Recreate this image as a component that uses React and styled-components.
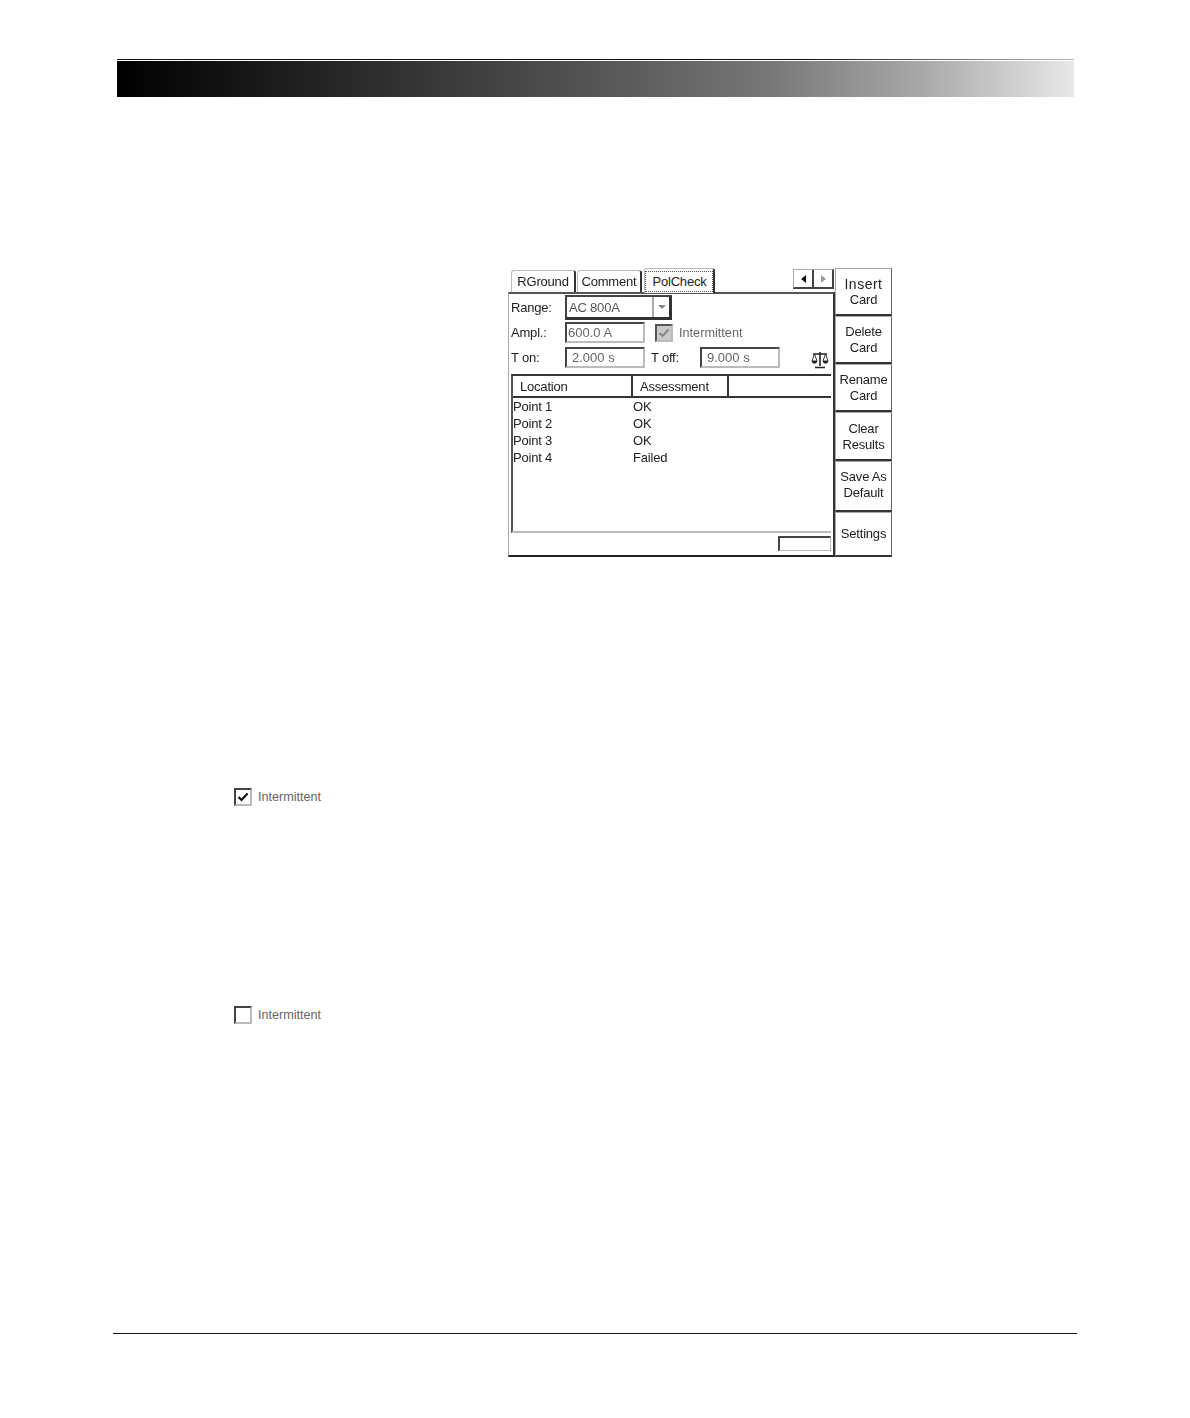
import styled, { createGlobalStyle } from "styled-components"

const GlobalStyle = createGlobalStyle`
html, body {
  margin: 0;
  padding: 0;
  background: #fff;
  font-family: "Liberation Sans", Arial, sans-serif;
}
`;

const Page = styled.div`
width: 1190px;
height: 1418px;
padding-top: 59px;
box-sizing: border-box;
display: flex;
flex-direction: column;
overflow: hidden;
`;

const HeaderBand = styled.div`
margin-left: 117px;
width: 957px;
height: 38px;
box-sizing: border-box;
border-top: 1px solid #111;
border-image: linear-gradient(90deg, #111 72%, #bbb 100%) 1;
padding-top: 1px;
& div {
  height: 36px;
  background: linear-gradient(90deg, #000 0%, #111 10%, #2a2a2a 25%, #555 50%, #777 68%, #a8a8a8 84%, #d0d0d0 94%, #e8e8e8 100%);
}
`;

const Shot = styled.div`
margin: 171px 0 0 508px;
width: 384px;
height: 289px;
display: flex;
color: #222;
font-size: 13px;
letter-spacing: -0.2px;
filter: blur(0.35px);
`;

const MainPanel = styled.div`
width: 327px;
display: flex;
flex-direction: column;
`;

const TabRow = styled.div`
height: 24px;
display: flex;
align-items: flex-end;
padding-left: 3px;
position: relative;
`;

const Tab = styled.div`
height: ${props => props.active ? "25px" : "22px"};
width: ${props => props.width}px;
box-sizing: border-box;
margin-right: ${props => props.active ? "0" : "1px"};
border: 1px solid #bbb;
border-right: 2px solid #333;
border-bottom: none;
border-radius: 3px 3px 0 0;
display: flex;
align-items: center;
justify-content: center;
background: #fff;
${props => props.active && `
  margin-bottom: -1px;
  margin-left: 1px;
  position: relative;
  z-index: 1;
  & span { outline: 1px dotted #555; padding: 2px 5px 2px 6px; white-space: nowrap; }
`}
`;

const ScrollArrows = styled.div`
position: absolute;
left: 285px;
top: 1px;
width: 41px;
height: 20px;
box-sizing: border-box;
border: 1px solid #aaa;
border-right: 2px solid #444;
border-bottom: 2px solid #444;
display: flex;
`;

const ArrowCell = styled.div`
flex: 1;
display: flex;
align-items: center;
justify-content: center;
&:first-child { border-right: 2px solid #444; }
&::before {
  content: "";
  border-top: 4px solid transparent;
  border-bottom: 4px solid transparent;
  ${props => props.left ? "border-right: 5px solid #111;" : "border-left: 5px solid #999;"}
}
`;

const Body = styled.div`
flex: 1;
box-sizing: border-box;
border-top: 2px solid #555;
border-left: 1px solid #aaa;
border-right: 2px solid #333;
border-bottom: 2px solid #222;
display: flex;
flex-direction: column;
`;

const Form = styled.div`
height: 80px;
box-sizing: border-box;
padding: 0 0 3px 2px;
display: flex;
flex-direction: column;
`;

const FormRow = styled.div`
height: ${props => props.h}px;
display: flex;
align-items: center;
position: relative;
`;

const Label = styled.div`
width: ${props => props.width || 54}px;
margin-left: ${props => props.left || 0}px;
flex-shrink: 0;
`;

const Field = styled.div`
width: ${props => props.width}px;
height: 21px;
box-sizing: border-box;
border: 2px solid #444;
border-right-color: #bbb;
border-bottom-color: #bbb;
padding-left: ${props => props.pad || 1}px;
display: flex;
align-items: center;
color: #666;
font-size: 13px;
letter-spacing: 0;
`;

const Combo = styled.div`
width: 107px;
height: 25px;
box-sizing: border-box;
border: 2px solid #444;
border-right: 3px solid #333;
border-bottom: 3px solid #333;
display: flex;
align-items: center;
justify-content: space-between;
padding-left: 2px;
color: #555;
`;

const ComboButton = styled.div`
width: 17px;
height: 20px;
box-sizing: border-box;
border-left: 2px solid #aaa;
display: flex;
align-items: center;
justify-content: center;
&::before {
  content: "";
  border-left: 4px solid transparent;
  border-right: 4px solid transparent;
  border-top: 4px solid #888;
}
`;

const CheckBox = styled.div`
width: 18px;
height: 18px;
box-sizing: border-box;
border: 2px solid ${props => props.dark ? "#444" : "#555"};
border-right-color: #bbb;
border-bottom-color: #bbb;
background: ${props => props.disabled ? "#c8c8c8" : "#fff"};
display: flex;
align-items: center;
justify-content: center;
flex-shrink: 0;
`;

const InlineCheck = styled.div`
margin-left: 10px;
display: flex;
align-items: center;
gap: 6px;
color: #666;
font-size: 12.7px;
letter-spacing: 0;
`;

const ScaleIcon = styled.svg`
position: absolute;
left: 300px;
top: 7px;
`;

const Table = styled.div`
flex: 1;
margin: 0 2px 0 2px;
display: flex;
flex-direction: column;
box-sizing: border-box;
border-left: 2px solid #555;
border-top: 2px solid #333;
`;

const HeaderRow = styled.div`
height: 20px;
display: flex;
border-bottom: 2px solid #333;
`;

const HeaderCell = styled.div`
width: ${props => props.width}px;
box-sizing: border-box;
padding-left: ${props => props.pad}px;
border-right: ${props => props.last ? "none" : "2px solid #333"};
display: flex;
align-items: center;
padding-top: 1px;
`;

const Rows = styled.div`
flex: 1;
border-bottom: 2px solid #bbb;
margin-left: -1px;
`;

const Row = styled.div`
height: 17px;
display: flex;
align-items: center;
&:first-child span:first-child { clip-path: inset(3px 0 0 0); }
`;

const Cell = styled.span`
width: ${props => props.width}px;
flex-shrink: 0;
padding-left: 1px;
box-sizing: border-box;
`;

const StatusBar = styled.div`
height: 22px;
flex-shrink: 0;
display: flex;
justify-content: flex-end;
align-items: flex-start;
padding: 3px 2px 0 0;
box-sizing: border-box;
`;

const StatusBox = styled.div`
width: 53px;
height: 15px;
box-sizing: border-box;
border: 2px solid #444;
border-right: 1px solid #bbb;
border-bottom: 1px solid #bbb;
`;

const SideBar = styled.div`
width: 57px;
display: flex;
flex-direction: column;
`;

const SideButton = styled.div`
height: ${props => props.h}px;
box-sizing: border-box;
border: 1px solid #aaa;
border-right: 1px solid #666;
border-bottom: 2px solid #333;
display: flex;
align-items: center;
justify-content: center;
text-align: center;
line-height: 16px;
padding-top: ${props => props.top || 0}px;
padding-bottom: ${props => props.bottom || 0}px;
`;

const ButtonLine = styled.div`
white-space: nowrap;
letter-spacing: ${props => props.wide ? "0.5px" : "inherit"};
font-size: ${props => props.wide ? "14px" : "inherit"};
`;

const CheckLine = styled.div`
margin: ${props => props.top}px 0 0 234px;
display: flex;
align-items: center;
gap: 6px;
height: 18px;
color: #666;
font-size: 12.6px;
`;

const FooterLine = styled.div`
margin: ${props => props.top}px 0 0 113px;
width: 964px;
height: 1px;
background: #111;
`;

const Tick = ({ color }) => (
  <svg width="12" height="12" viewBox="0 0 12 12">
    <path d="M1.5 6 L4.5 9 L10.5 2.5" fill="none" stroke={color} strokeWidth="2.2" />
  </svg>
);

const Scale = () => (
  <ScaleIcon width="18" height="18" viewBox="0 0 18 18">
    <path d="M9 1 V15 M2 3 H16 M4 16.5 H14" stroke="#222" strokeWidth="1.6" fill="none" />
    <path d="M3.5 3 L1 10 H6 Z M14.5 3 L12 10 H17 Z" stroke="#333" strokeWidth="1" fill="none" />
    <path d="M0.5 10 H6.5 L5 12.5 H2 Z M11.5 10 H17.5 L16 12.5 H13 Z" fill="#222" />
  </ScaleIcon>
);

const points = [
  ["Point 1", "OK"],
  ["Point 2", "OK"],
  ["Point 3", "OK"],
  ["Point 4", "Failed"],
];

const buttons = [
  { lines: ["Insert", "Card"], h: 48, top: 1, wide: true },
  { lines: ["Delete", "Card"], h: 48 },
  { lines: ["Rename", "Card"], h: 48 },
  { lines: ["Clear", "Results"], h: 49, top: 2 },
  { lines: ["Save As", "Default"], h: 51, bottom: 2 },
  { lines: ["Settings"], h: 45 },
];

const App = () => {
  return <Page>
    <GlobalStyle />
    <HeaderBand><div /></HeaderBand>
    <Shot>
      <MainPanel>
        <TabRow>
          <Tab width={65}>RGround</Tab>
          <Tab width={65}>Comment</Tab>
          <Tab active width={71}><span>PolCheck</span></Tab>
          <ScrollArrows>
            <ArrowCell left />
            <ArrowCell />
          </ScrollArrows>
        </TabRow>
        <Body>
          <Form>
            <FormRow h={27}>
              <Label>Range:</Label>
              <Combo>AC 800A<ComboButton /></Combo>
            </FormRow>
            <FormRow h={23}>
              <Label>Ampl.:</Label>
              <Field width={80}>600.0 A</Field>
              <InlineCheck>
                <CheckBox disabled><Tick color="#888" /></CheckBox>
                Intermittent
              </InlineCheck>
            </FormRow>
            <FormRow h={27}>
              <Label>T on:</Label>
              <Field width={80} pad={5}>2.000 s</Field>
              <Label width={49} left={6}>T off:</Label>
              <Field width={80} pad={5}>9.000 s</Field>
              <Scale />
            </FormRow>
          </Form>
          <Table>
            <HeaderRow>
              <HeaderCell width={120} pad={7}>Location</HeaderCell>
              <HeaderCell width={96} pad={7}>Assessment</HeaderCell>
              <HeaderCell width={102} last />
            </HeaderRow>
            <Rows>
              {points.map((p) => (
                <Row key={p[0]}>
                  <Cell width={120}>{p[0]}</Cell>
                  <Cell width={100}>{p[1]}</Cell>
                </Row>
              ))}
            </Rows>
          </Table>
          <StatusBar><StatusBox /></StatusBar>
        </Body>
      </MainPanel>
      <SideBar>
        {buttons.map((b) => (
          <SideButton key={b.lines[0]} h={b.h} top={b.top} bottom={b.bottom}>
            <div>
              {b.lines.map((line, i) => (
                <ButtonLine key={line} wide={b.wide && i === 0}>{line}</ButtonLine>
              ))}
            </div>
          </SideButton>
        ))}
      </SideBar>
    </Shot>
    <CheckLine top={231}>
      <CheckBox dark><Tick color="#111" /></CheckBox>
      Intermittent
    </CheckLine>
    <CheckLine top={200}>
      <CheckBox dark />
      Intermittent
    </CheckLine>
    <FooterLine top={309} />
  </Page>
};

export default App
